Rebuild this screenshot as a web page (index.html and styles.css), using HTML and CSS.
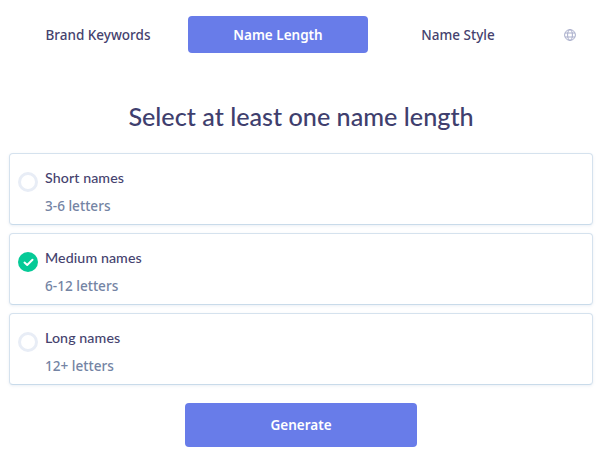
FILE: index.html
```html
<!DOCTYPE html>
<html lang="en">

<head>
   <meta charset="UTF-8">
   <title>Name Length</title>
   <link rel="stylesheet" href="styles.css">
</head>

<body>
   <!-- Top tabs -->
   <nav class="tabs">
      <a class="tab">Brand Keywords</a>
      <a class="tab active">Name Length</a>
      <a class="tab">Name Style</a>
      <span class="globe">
         <svg width="12" height="12" viewBox="0 0 12 12" fill="none" stroke="#a9aecb" stroke-width="1">
            <circle cx="6" cy="6" r="5.4"></circle>
            <ellipse cx="6" cy="6" rx="2.4" ry="5.4"></ellipse>
            <path d="M1 4H11M1 8H11"></path>
         </svg>
      </span>
   </nav>

   <main class="content">
      <h1 class="title">Select at least one name length</h1>

      <!-- Length options -->
      <div class="options">
         <div class="option">
            <span class="radio"></span>
            <div class="option-text">
               <div class="option-name">Short names</div>
               <div class="option-sub">3-6 letters</div>
            </div>
         </div>
         <div class="option">
            <span class="radio checked">
               <svg width="11" height="9" viewBox="0 0 11 9" fill="none" stroke="#ffffff" stroke-width="2" stroke-linecap="round" stroke-linejoin="round">
                  <path d="M1.5 4.6L4.2 7L9.5 1.8"></path>
               </svg>
            </span>
            <div class="option-text">
               <div class="option-name">Medium names</div>
               <div class="option-sub">6-12 letters</div>
            </div>
         </div>
         <div class="option">
            <span class="radio"></span>
            <div class="option-text">
               <div class="option-name">Long names</div>
               <div class="option-sub">12+ letters</div>
            </div>
         </div>
      </div>

      <button class="generate" type="button">Generate</button>
   </main>
</body>

</html>
```

FILE: styles.css
```css
/* Page */
body {
   margin: 0;
   background: #ffffff;
   font-family: "Noto Sans", sans-serif;
   color: #45426e;
}

/* Tabs */
.tabs {
   display: flex;
   align-items: center;
   padding: 16px 0 0 8px;
}

.tab {
   width: 180px;
   height: 37px;
   display: flex;
   align-items: center;
   justify-content: center;
   font-size: 13.5px;
   font-weight: 500;
   border-radius: 4px;
}

.tab.active {
   background: #687ce9;
   color: #ffffff;
   font-weight: 600;
}

.globe {
   display: flex;
   margin-left: 16px;
}

/* Main column */
.content {
   margin: 0 3px 0 9px;
}

/* Heading */
.title {
   margin: 45px 0 19px;
   text-align: center;
   font-family: "Lato", sans-serif;
   font-size: 25.2px;
   line-height: 36px;
   font-weight: 500;
   color: #3f3f6e;
}

/* Options */
.options {
   display: flex;
   flex-direction: column;
   gap: 8px;
}

.option {
   height: 72px;
   box-sizing: border-box;
   display: flex;
   align-items: flex-start;
   gap: 7px;
   padding: 14px 8px 0;
   background: #ffffff;
   border: 1px solid #d5e2ee;
   border-bottom-color: #c9dbea;
   border-radius: 4px;
   box-shadow: 0 1px 3px rgba(120, 150, 190, 0.15);
}

.radio {
   width: 20px;
   height: 20px;
   margin-top: 4px;
   box-sizing: border-box;
   flex: none;
   display: flex;
   align-items: center;
   justify-content: center;
   border: 3px solid #e8edf6;
   border-radius: 50%;
}

.radio.checked {
   background: #05ca97;
   border: none;
}

.option-name {
   font-family: "Lato", sans-serif;
   font-size: 14.2px;
   font-weight: 500;
   line-height: 20px;
   letter-spacing: 0.1px;
   color: #45426e;
}

.option-sub {
   margin-top: 8px;
   font-size: 13.6px;
   line-height: 20px;
   font-weight: 500;
   color: #7484a4;
}

/* Generate button */
.generate {
   display: block;
   width: 232px;
   height: 44px;
   margin: 18px auto 0;
   border: none;
   border-radius: 4px;
   background: #687ce9;
   color: #ffffff;
   font-family: "Noto Sans", sans-serif;
   font-size: 13.5px;
   font-weight: 600;
}
```
